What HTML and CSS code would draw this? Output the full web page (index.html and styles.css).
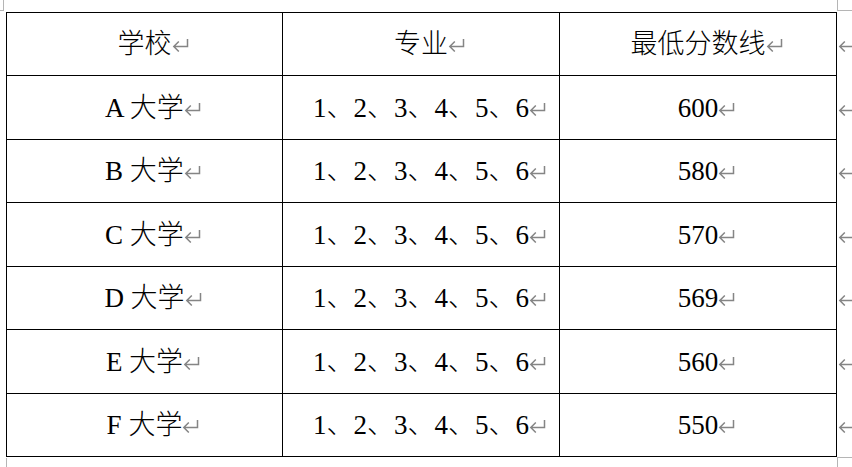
FILE: index.html
```html
<!DOCTYPE html>
<html lang="zh">
<head>
<meta charset="utf-8">
<link rel="stylesheet" href="styles.css">
</head>
<body>
<div class="page">
  <span class="crop crop-tl"></span>
  <span class="crop crop-tr"></span>
  <span class="crop crop-bl"></span>
  <span class="crop crop-br"></span>
  <table class="grid">
    <colgroup>
      <col class="c1"><col class="c2"><col class="c3"><col class="c4">
    </colgroup>
    <tr class="r-odd">
      <td>学校<span class="pm"><svg viewBox="0 0 17 14"><path d="M15.5 1V8.5H1.8M6.8 3.5L1.8 8.5L6.8 13.5"/></svg></span></td>
      <td>专业<span class="pm"><svg viewBox="0 0 17 14"><path d="M15.5 1V8.5H1.8M6.8 3.5L1.8 8.5L6.8 13.5"/></svg></span></td>
      <td>最低分数线<span class="pm"><svg viewBox="0 0 17 14"><path d="M15.5 1V8.5H1.8M6.8 3.5L1.8 8.5L6.8 13.5"/></svg></span></td>
      <td class="end"><span class="pm"><svg viewBox="0 0 17 14"><path d="M15.5 1V8.5H1.8M6.8 3.5L1.8 8.5L6.8 13.5"/></svg></span></td>
    </tr>
    <tr class="r-even">
      <td>A 大学<span class="pm"><svg viewBox="0 0 17 14"><path d="M15.5 1V8.5H1.8M6.8 3.5L1.8 8.5L6.8 13.5"/></svg></span></td>
      <td>1、2、3、4、5、6<span class="pm"><svg viewBox="0 0 17 14"><path d="M15.5 1V8.5H1.8M6.8 3.5L1.8 8.5L6.8 13.5"/></svg></span></td>
      <td>600<span class="pm"><svg viewBox="0 0 17 14"><path d="M15.5 1V8.5H1.8M6.8 3.5L1.8 8.5L6.8 13.5"/></svg></span></td>
      <td class="end"><span class="pm"><svg viewBox="0 0 17 14"><path d="M15.5 1V8.5H1.8M6.8 3.5L1.8 8.5L6.8 13.5"/></svg></span></td>
    </tr>
    <tr class="r-odd">
      <td>B 大学<span class="pm"><svg viewBox="0 0 17 14"><path d="M15.5 1V8.5H1.8M6.8 3.5L1.8 8.5L6.8 13.5"/></svg></span></td>
      <td>1、2、3、4、5、6<span class="pm"><svg viewBox="0 0 17 14"><path d="M15.5 1V8.5H1.8M6.8 3.5L1.8 8.5L6.8 13.5"/></svg></span></td>
      <td>580<span class="pm"><svg viewBox="0 0 17 14"><path d="M15.5 1V8.5H1.8M6.8 3.5L1.8 8.5L6.8 13.5"/></svg></span></td>
      <td class="end"><span class="pm"><svg viewBox="0 0 17 14"><path d="M15.5 1V8.5H1.8M6.8 3.5L1.8 8.5L6.8 13.5"/></svg></span></td>
    </tr>
    <tr class="r-even">
      <td>C 大学<span class="pm"><svg viewBox="0 0 17 14"><path d="M15.5 1V8.5H1.8M6.8 3.5L1.8 8.5L6.8 13.5"/></svg></span></td>
      <td>1、2、3、4、5、6<span class="pm"><svg viewBox="0 0 17 14"><path d="M15.5 1V8.5H1.8M6.8 3.5L1.8 8.5L6.8 13.5"/></svg></span></td>
      <td>570<span class="pm"><svg viewBox="0 0 17 14"><path d="M15.5 1V8.5H1.8M6.8 3.5L1.8 8.5L6.8 13.5"/></svg></span></td>
      <td class="end"><span class="pm"><svg viewBox="0 0 17 14"><path d="M15.5 1V8.5H1.8M6.8 3.5L1.8 8.5L6.8 13.5"/></svg></span></td>
    </tr>
    <tr class="r-odd">
      <td>D 大学<span class="pm"><svg viewBox="0 0 17 14"><path d="M15.5 1V8.5H1.8M6.8 3.5L1.8 8.5L6.8 13.5"/></svg></span></td>
      <td>1、2、3、4、5、6<span class="pm"><svg viewBox="0 0 17 14"><path d="M15.5 1V8.5H1.8M6.8 3.5L1.8 8.5L6.8 13.5"/></svg></span></td>
      <td>569<span class="pm"><svg viewBox="0 0 17 14"><path d="M15.5 1V8.5H1.8M6.8 3.5L1.8 8.5L6.8 13.5"/></svg></span></td>
      <td class="end"><span class="pm"><svg viewBox="0 0 17 14"><path d="M15.5 1V8.5H1.8M6.8 3.5L1.8 8.5L6.8 13.5"/></svg></span></td>
    </tr>
    <tr class="r-even">
      <td>E 大学<span class="pm"><svg viewBox="0 0 17 14"><path d="M15.5 1V8.5H1.8M6.8 3.5L1.8 8.5L6.8 13.5"/></svg></span></td>
      <td>1、2、3、4、5、6<span class="pm"><svg viewBox="0 0 17 14"><path d="M15.5 1V8.5H1.8M6.8 3.5L1.8 8.5L6.8 13.5"/></svg></span></td>
      <td>560<span class="pm"><svg viewBox="0 0 17 14"><path d="M15.5 1V8.5H1.8M6.8 3.5L1.8 8.5L6.8 13.5"/></svg></span></td>
      <td class="end"><span class="pm"><svg viewBox="0 0 17 14"><path d="M15.5 1V8.5H1.8M6.8 3.5L1.8 8.5L6.8 13.5"/></svg></span></td>
    </tr>
    <tr class="r-odd">
      <td>F 大学<span class="pm"><svg viewBox="0 0 17 14"><path d="M15.5 1V8.5H1.8M6.8 3.5L1.8 8.5L6.8 13.5"/></svg></span></td>
      <td>1、2、3、4、5、6<span class="pm"><svg viewBox="0 0 17 14"><path d="M15.5 1V8.5H1.8M6.8 3.5L1.8 8.5L6.8 13.5"/></svg></span></td>
      <td>550<span class="pm"><svg viewBox="0 0 17 14"><path d="M15.5 1V8.5H1.8M6.8 3.5L1.8 8.5L6.8 13.5"/></svg></span></td>
      <td class="end"><span class="pm"><svg viewBox="0 0 17 14"><path d="M15.5 1V8.5H1.8M6.8 3.5L1.8 8.5L6.8 13.5"/></svg></span></td>
    </tr>
  </table>
</div>
</body>
</html>
```
FILE: styles.css
```css
html, body {
  margin: 0;
  padding: 0;
  background: #fff;
  overflow: hidden;
}
.page {
  position: relative;
  width: 852px;
  height: 467px;
  padding: 12px 0 0 6px;
  box-sizing: border-box;
}
.grid {
  border-collapse: collapse;
  table-layout: fixed;
  width: 876px;
  font-family: "Liberation Serif", "Noto Sans CJK SC", serif;
  font-size: 27px;
  font-weight: 300;
  color: #000;
}
.c1 { width: 276px; }
.c2 { width: 277px; }
.c3 { width: 277px; }
.c4 { width: 46px; }
.grid td {
  border: 1px solid #000;
  text-align: center;
  vertical-align: middle;
  padding: 0;
  white-space: nowrap;
  line-height: 30px;
}
.grid td.end {
  border: none;
  text-align: left;
  padding-left: 1px;
}
.r-odd td { height: 62px; }
.r-even td { height: 63px; }
.pm {
  display: inline-block;
  width: 17px;
  height: 14px;
  margin-right: -17px;
  vertical-align: 1px;
}
.end .pm { margin-right: 0; }
.pm svg {
  display: block;
  width: 17px;
  height: 14px;
  fill: none;
  stroke: #858585;
  stroke-width: 1.5;
}
.crop {
  position: absolute;
  border-color: #b5b5b5;
  border-style: solid;
  border-width: 0;
}
.crop-tl {
  left: 0;
  top: 0;
  width: 3px;
  height: 10px;
  border-right-width: 1px;
  border-bottom-width: 1px;
}
.crop-tr {
  left: 837px;
  top: 0;
  width: 15px;
  height: 10px;
  border-left-width: 1px;
  border-bottom-width: 1px;
}
.crop-bl {
  left: 0;
  top: 458px;
  width: 6px;
  height: 9px;
  border-right-width: 1px;
}
.crop-br {
  left: 837px;
  top: 457px;
  width: 15px;
  height: 10px;
  border-left-width: 1px;
  border-top-width: 1px;
}
```
